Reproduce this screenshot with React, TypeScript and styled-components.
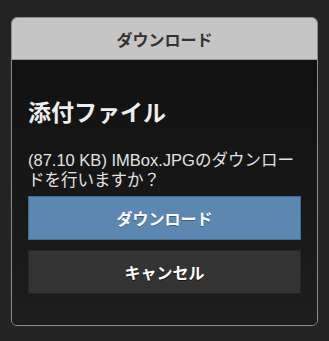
import React from "react";
import styled, { createGlobalStyle } from "styled-components";

const GlobalStyle = createGlobalStyle`
  html, body {
    margin: 0;
    padding: 0;
    background: #242424;
  }
  body {
    font-family: "Liberation Sans", "Noto Sans CJK JP", sans-serif;
  }
`;

export default function App() {
  return (
    <Page>
      <GlobalStyle />
      <Dialog>
        <Header>ダウンロード</Header>
        <Body>
          <Title>添付ファイル</Title>
          <Message>
            (87.10 KB) IMBox.JPGのダウンロー
            <br />
            ドを行いますか？
          </Message>
          <Button $primary>ダウンロード</Button>
          <Button>キャンセル</Button>
        </Body>
      </Dialog>
    </Page>
  );
}

const Page = styled.div`
  min-height: 341px;
  padding: 17px 11px 14px;
  box-sizing: border-box;
`;

const Dialog = styled.div`
  border: 1px solid #8c8c8c;
  border-radius: 6px;
  overflow: hidden;
`;

const Header = styled.div`
  height: 41px;
  display: flex;
  align-items: center;
  justify-content: center;
  background: #c5c5c5;
  border-bottom: 1px solid #9a9a9a;
  color: #333;
  font-size: 16px;
  font-weight: bold;
`;

const Body = styled.div`
  display: flex;
  flex-direction: column;
  padding: 39px 16px 31px;
  background: linear-gradient(#111111, #1d1d1d);
  color: #e6e6e6;
`;

const Title = styled.h2`
  margin: 0 0 23px;
  font-size: 23px;
  line-height: 28px;
  font-weight: bold;
  color: #eeeeee;
`;

const Message = styled.p`
  margin: 0 0 6px;
  font-size: 16.5px;
  line-height: 20px;
  white-space: nowrap;
  color: #e2e2e2;
`;

const Button = styled.button<{ $primary?: boolean }>`
  height: 44px;
  margin: 0 0 10px;
  border: 1px solid ${(p) => (p.$primary ? "#3f6b96" : "#262626")};
  background: ${(p) => (p.$primary ? "#5b87b0" : "#333333")};
  color: #ffffff;
  font-family: "Liberation Sans", "Noto Sans CJK JP", sans-serif;
  font-size: 16px;
  font-weight: bold;
  text-shadow: ${(p) => (p.$primary ? "0 1px 0 #3a5f85" : "0 1px 0 #111")};
  cursor: pointer;

  &:last-child {
    margin-bottom: 0;
  }
`;
